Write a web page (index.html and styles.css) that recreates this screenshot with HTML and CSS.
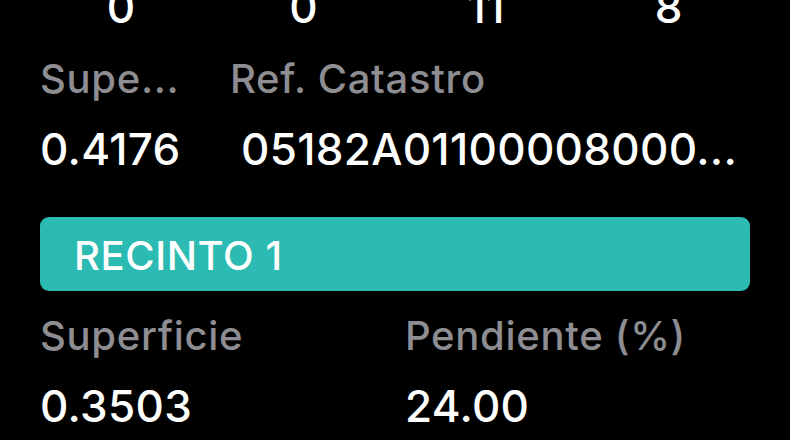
FILE: index.html
```html
<!DOCTYPE html>
<html lang="es">
<head>
<meta charset="utf-8">
<title>Parcela</title>
<link rel="stylesheet" href="styles.css">
</head>
<body>
<main class="screen">
  <div class="counts">
    <span class="count">0</span>
    <span class="count">0</span>
    <span class="count">11</span>
    <span class="count">8</span>
  </div>

  <section class="fields fields-parcel">
    <div class="field">
      <div class="label">Supe...</div>
      <div class="value">0.4176</div>
    </div>
    <div class="field">
      <div class="label">Ref. Catastro</div>
      <div class="value value-ref">05182A01100008000...</div>
    </div>
  </section>

  <div class="section-bar">RECINTO 1</div>

  <section class="fields fields-recinto">
    <div class="field">
      <div class="label">Superficie</div>
      <div class="value">0.3503</div>
    </div>
    <div class="field">
      <div class="label">Pendiente (%)</div>
      <div class="value">24.00</div>
    </div>
  </section>
</main>
</body>
</html>
```

FILE: styles.css
```css
html, body {
  margin: 0;
  padding: 0;
  background: #000;
}

body {
  width: 790px;
  height: 440px;
  overflow: hidden;
  font-family: "Inter", "Noto Sans", sans-serif;
  font-weight: 500;
  color: #fff;
}

.screen {
  padding: 0 40px;
}

.counts {
  display: grid;
  grid-template-columns: repeat(4, 1fr);
  margin: -18px -10px 0;
  font-size: 44px;
  letter-spacing: 0.4px;
  line-height: 50px;
  text-align: center;
}

.fields {
  display: grid;
}

.fields-parcel {
  grid-template-columns: 142px 1fr;
  column-gap: 48px;
  margin-top: 24px;
}

.fields-recinto {
  grid-template-columns: 1fr 1fr;
  column-gap: 20px;
  margin-top: 22px;
}

.field {
  display: flex;
  flex-direction: column;
  gap: 22px;
  min-width: 0;
}

.label {
  font-size: 40px;
  letter-spacing: 0.7px;
  line-height: 46px;
  color: #8d8d92;
  white-space: nowrap;
}

.value {
  font-size: 44px;
  letter-spacing: 0.3px;
  line-height: 50px;
  color: #fff;
  white-space: nowrap;
}

.value-ref {
  padding-left: 11px;
}

.section-bar {
  margin-top: 43px;
  height: 74px;
  box-sizing: border-box;
  padding: 3px 0 0 34px;
  line-height: 71px;
  font-size: 40px;
  letter-spacing: 0.6px;
  background: #2bbbb2;
  border-radius: 9px;
  color: #fff;
}
```
